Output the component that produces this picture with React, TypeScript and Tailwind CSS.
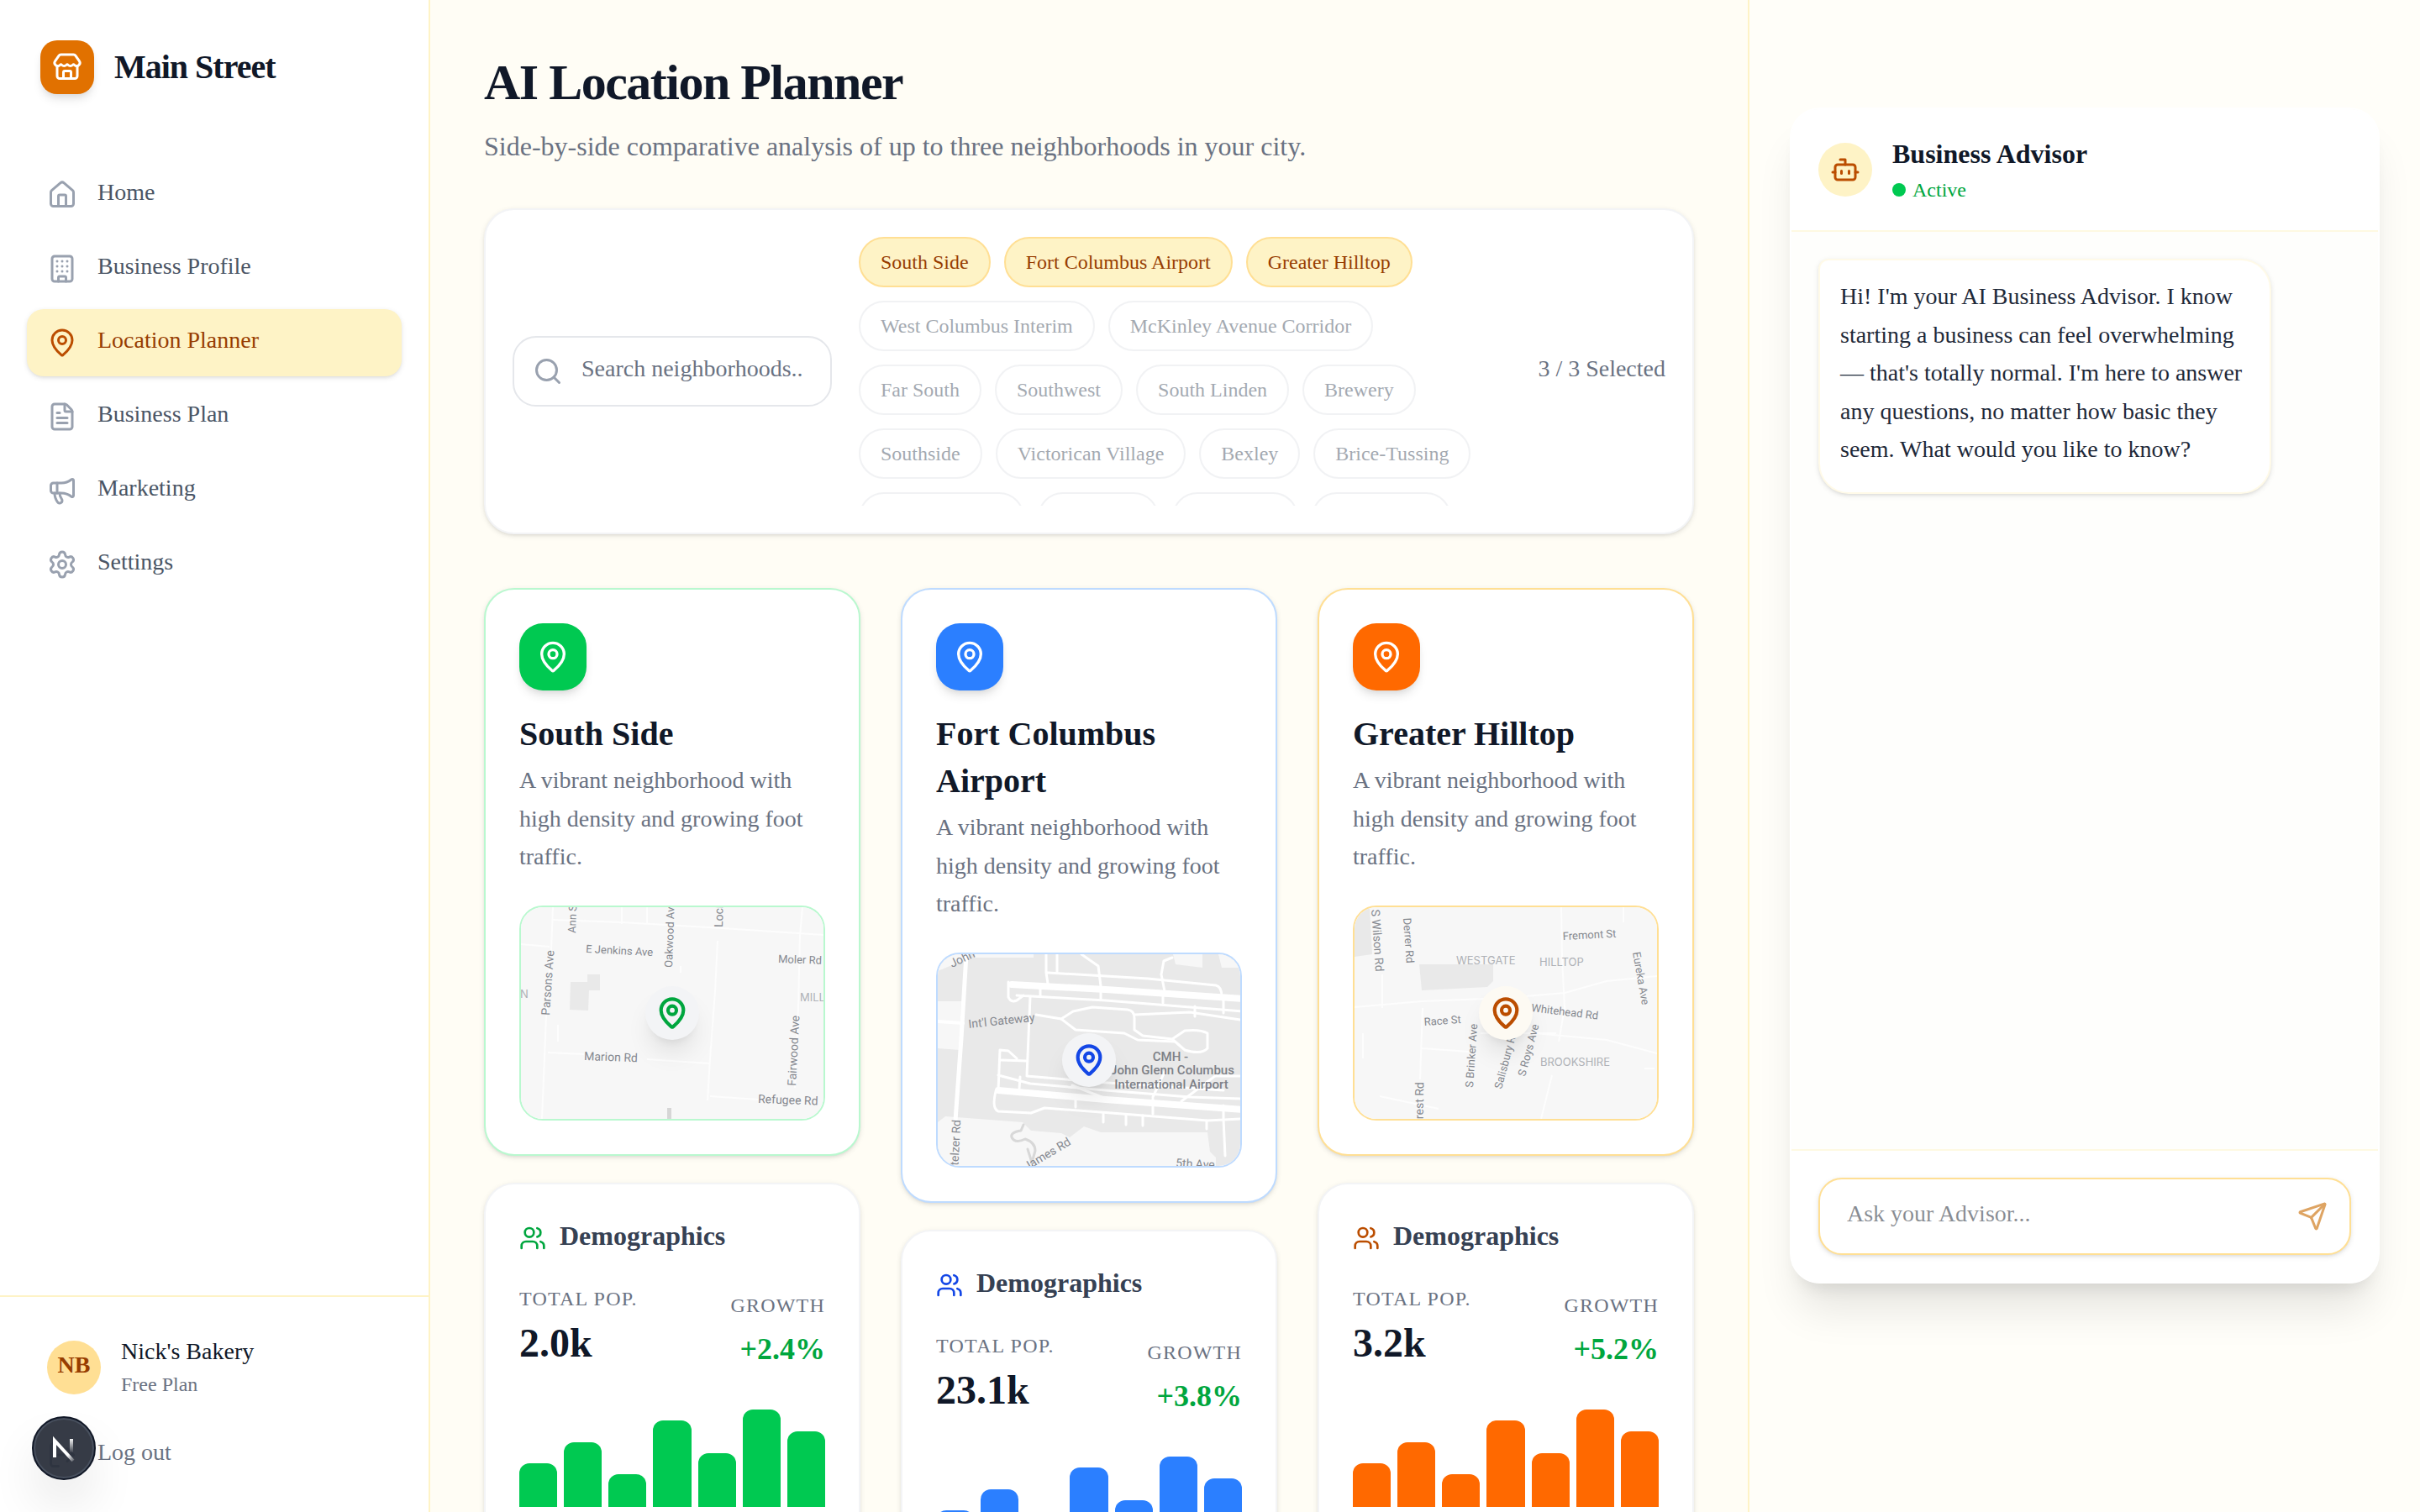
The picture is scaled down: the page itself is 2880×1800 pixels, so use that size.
import { ReactNode } from "react";
import {
  Bot,
  Building,
  FileText,
  House,
  LogOut,
  LucideIcon,
  MapPin,
  Megaphone,
  Search,
  Send,
  Settings,
  Store,
  Users,
} from "lucide-react";
import clsx from "clsx";

const navItems: { label: string; icon: LucideIcon; active?: boolean }[] = [
  { label: "Home", icon: House },
  { label: "Business Profile", icon: Building },
  { label: "Location Planner", icon: MapPin, active: true },
  { label: "Business Plan", icon: FileText },
  { label: "Marketing", icon: Megaphone },
  { label: "Settings", icon: Settings },
];

const selected = ["South Side", "Fort Columbus Airport", "Greater Hilltop"];

const available = [
  "West Columbus Interim",
  "McKinley Avenue Corridor",
  "Far South",
  "Southwest",
  "South Linden",
  "Brewery",
  "Southside",
  "Victorican Village",
  "Bexley",
  "Brice-Tussing",
  "Merion Village",
  "Eastmoor",
  "Northland",
  "Rocky Fork",
];

const bars = [40, 60, 30, 80, 50, 90, 70];

/* ---------- Shared styles ---------- */

const cardShadow =
  "shadow-[0_2px_6px_0_rgba(0,0,0,0.1),0_2px_4px_-2px_rgba(0,0,0,0.1)]";
const iconShadow =
  "shadow-[0_8px_12px_-2px_rgba(0,0,0,0.1),0_4px_8px_-4px_rgba(0,0,0,0.1)]";

const bodyText = "pb-1.5 text-[28px] leading-[34px]";
const titleText = "pb-1.5 text-[32px] leading-[42px] font-bold";

/* ---------- Maps ---------- */

type Label = {
  text: string;
  x: number;
  y: number;
  rotate?: number;
  size?: number;
};

const RoadLabels = ({ labels }: { labels: Label[] }) => (
  <g fill="#85888f" fontFamily="Roboto, sans-serif">
    {labels.map((l) => (
      <text
        key={l.text}
        fontSize={l.size ?? 13}
        transform={`translate(${l.x} ${l.y}) rotate(${l.rotate ?? 0})`}
      >
        {l.text}
      </text>
    ))}
  </g>
);

const AreaLabels = ({ labels }: { labels: Label[] }) => (
  <g fill="#aeb1b6" fontFamily="Inter, sans-serif">
    {labels.map((l) => (
      <text key={l.text} x={l.x} y={l.y} fontSize={13}>
        {l.text}
      </text>
    ))}
  </g>
);

const MapFrame = ({ children, fill }: { children: ReactNode; fill: string }) => (
  <svg
    viewBox="0 0 360 252"
    preserveAspectRatio="xMidYMid slice"
    className="h-full w-full"
    aria-hidden="true"
  >
    <rect width="360" height="252" fill={fill} />
    {children}
  </svg>
);

const SouthSideMap = () => (
  <MapFrame fill="#f7f7f7">
    <g fill="#e9e9e9">
      <path d="M59 89h20v-9h15v19H81l-1 24-22-1z" />
      <path d="M174 239h5v13h-5z" fill="#d6d6d6" />
    </g>
    <g fill="none" stroke="#fdfdfd" strokeWidth="2">
      <path d="M38 0 L36 50 L30 130 L25 252" />
      <path d="M38 15 L120 18 L240 25 L360 33" />
      <path d="M120 0V20 M150 0V20 M335 0 L332 34 L330 120 L326 215" />
      <path d="M234 40 L231 100 L225 180 L222 230" />
      <path d="M32 173 L75 175 M150 181 L224 186" />
      <path d="M225 225 L283 229 M0 44 L34 47 M44 140v20 M190 70v8" />
    </g>
    <RoadLabels
      labels={[
        { text: "Ann St", x: 65, y: 31, rotate: -88 },
        { text: "E Jenkins Ave", x: 77, y: 54, rotate: 3 },
        { text: "Oakwood Ave", x: 180, y: 72, rotate: -88 },
        { text: "Lockbourne Rd", x: 240, y: 24, rotate: -89, size: 14 },
        { text: "Parsons Ave", x: 34, y: 129, rotate: -86, size: 14 },
        { text: "Moler Rd", x: 306, y: 66, rotate: 2 },
        { text: "Fairwood Ave", x: 327, y: 213, rotate: -87, size: 14 },
        { text: "Marion Rd", x: 75, y: 182, rotate: 2, size: 14 },
        { text: "Refugee Rd", x: 282, y: 233, rotate: 2, size: 14 },
      ]}
    />
    <AreaLabels
      labels={[
        { text: "N", x: -1, y: 108 },
        { text: "MILLBROOK", x: 332, y: 112 },
      ]}
    />
  </MapFrame>
);

const AirportMap = () => (
  <MapFrame fill="#e9e9e9">
    <g fill="#f7f7f7">
      <path d="M0 0 H34 V6 L0 20z" />
      <path d="M0 56 H28 L26 114 L0 112z" />
      <path d="M9 193 L101 200 L111 210 L147 213 L157 218 L174 205 L194 212 L321 212 L324 235 L331 242 V252 H0 V200z" />
      <path d="M44 0h70v4H44z M280 0h35v16l-32-4z M334 0h26v16h-22z" />
    </g>
    <g fill="none" stroke="#fff" strokeLinejoin="round" strokeLinecap="round">
      <g strokeWidth="5">
        <path d="M34 0 L28 100 L21 198" />
        <path d="M0 80 L30 82" strokeWidth="4" />
      </g>
      <g strokeWidth="8">
        <path d="M88 36 L200 42 L362 53" />
        <path d="M72 162 L200 173 L362 185" />
      </g>
      <g strokeWidth="3">
        <path d="M84 33 V51 Q87 58 94 55 L102 49 M94 49 L200 55 L362 68" />
        <path d="M122 38v12 M194 40v14 M268 45v13 M340 50v20 M306 62v12" />
        <path d="M129 0 V22 L131 35 M142 0 V22 M131 22 L250 29 L331 37 Q338 39 338 50" />
        <path d="M171 0 L191 14 L194 38 M279 4 L269 8 L266 24 L270 44" />
        <path d="M117 72 L147 77 L161 68 L184 63 L226 66 Q234 67 234 76 V90 L244 97 L279 101 L294 114 Q314 120 321 112 V94 Q312 89 294 91 L279 101" />
        <path d="M147 77 L164 90 L222 94 L238 102 L282 104" />
        <path d="M110 51 L106 145 L187 152 L340 162" />
        <path d="M74 114 L72 162 M74 114 L84 115 L94 124 M76 126 L106 127 M72 144 L110 154 L200 162 L300 170 L360 172" />
        <path d="M69 163 Q64 184 72 187 L111 189 L127 183 L194 188 L321 198 L362 196" />
        <path d="M98 146 L97 160 M164 168v14 M256 172v18 M340 180v16 M340 196 L342 240" />
        <path d="M197 190v10 M224 191v12 M244 192v12 M320 198v10" />
        <path d="M160 156 L200 172 M256 170 L270 140 M290 175 L330 145 H360" />
        <path d="M234 72 L300 69 L360 78" />
      </g>
      <path
        d="M102 203 L99 210 Q86 212 88 218 Q92 226 104 220 Q116 224 116 234 L112 248 L107 232"
        stroke="#d8d8d8"
        strokeWidth="3"
      />
    </g>
    <RoadLabels
      labels={[
        { text: "John", x: 17, y: 16, rotate: -25, size: 14 },
        { text: "Int'l Gateway", x: 37, y: 88, rotate: -6, size: 14 },
        { text: "Stelzer Rd", x: 24, y: 260, rotate: -87, size: 14 },
        { text: "James Rd", x: 106, y: 258, rotate: -31, size: 14 },
        { text: "5th Ave", x: 283, y: 253, rotate: 3, size: 14 },
      ]}
    />
    <g
      fill="#7d8087"
      fontFamily="Roboto, sans-serif"
      fontSize="15"
      fontWeight="500"
      textAnchor="middle"
    >
      <text x="277" y="127">CMH -</text>
      <text x="279" y="143">John Glenn Columbus</text>
      <text x="278" y="160">International Airport</text>
    </g>
  </MapFrame>
);

const HilltopMap = () => (
  <MapFrame fill="#f7f7f7">
    <g fill="#e9e9e9">
      <path d="M0 0h18l3 56-21 3z" />
      <path d="M77 68 L165 68 V88 L158 95 L80 99z" />
    </g>
    <g fill="none" stroke="#fdfdfd" strokeWidth="2">
      <path d="M0 119 L80 112 L180 108 L250 102 L300 88 L360 82" />
      <path d="M33 80v40 M81 120 L78 205 M80 168 L136 172" />
      <path d="M246 0 L247 60 L250 120 L243 160 M320 0v18" />
      <path d="M215 150 L300 158 L360 174 M150 150h90" />
      <path d="M235 200 L222 252 M30 225 L100 240 M345 192h12 M10 150v30" />
    </g>
    <RoadLabels
      labels={[
        { text: "S Wilson Rd", x: 20, y: 3, rotate: 86, size: 14 },
        { text: "Derrer Rd", x: 58, y: 13, rotate: 86 },
        { text: "Fremont St", x: 248, y: 39, rotate: -3 },
        { text: "Eureka Ave", x: 331, y: 54, rotate: 80 },
        { text: "Whitehead Rd", x: 210, y: 124, rotate: 7 },
        { text: "Race St", x: 83, y: 141, rotate: -4 },
        { text: "S Brinker Ave", x: 141, y: 215, rotate: -86 },
        { text: "Salisbury Rd", x: 175, y: 217, rotate: -75 },
        { text: "S Roys Ave", x: 203, y: 202, rotate: -75 },
        { text: "Demorest Rd", x: 81, y: 289, rotate: -89, size: 14 },
      ]}
    />
    <AreaLabels
      labels={[
        { text: "WESTGATE", x: 121, y: 68 },
        { text: "HILLTOP", x: 220, y: 70 },
        { text: "BROOKSHIRE", x: 221, y: 189 },
      ]}
    />
  </MapFrame>
);

/* ---------- Neighborhood columns ---------- */

const neighborhoods = [
  {
    name: "South Side",
    population: "2.0k",
    growth: "+2.4%",
    map: SouthSideMap,
    border: "border-green-200",
    solid: "bg-green-500",
    text: "text-green-600",
    pin: "bg-gray-100",
  },
  {
    name: "Fort Columbus Airport",
    population: "23.1k",
    growth: "+3.8%",
    map: AirportMap,
    border: "border-blue-200",
    solid: "bg-blue-500",
    text: "text-blue-700",
    pin: "bg-gray-100",
  },
  {
    name: "Greater Hilltop",
    population: "3.2k",
    growth: "+5.2%",
    map: HilltopMap,
    border: "border-[#ffdf94]",
    solid: "bg-orange-500",
    text: "text-amber-700",
    pin: "bg-[#fdfaf3]",
  },
];

const NeighborhoodColumn = ({ data }: { data: (typeof neighborhoods)[number] }) => {
  const Map = data.map;

  return (
    <div className="flex min-w-0 flex-col gap-8">
      <section
        className={clsx("rounded-[36px] border-2 bg-white p-10", cardShadow, data.border)}
      >
        <div
          className={clsx(
            "mb-6 flex size-20 items-center justify-center rounded-[28px] text-white",
            iconShadow,
            data.solid,
          )}
        >
          <MapPin className="size-10" />
        </div>
        <h2 className="text-[40px] leading-14 font-bold text-gray-900">
          {data.name}
        </h2>
        <p className="mt-1 text-[28px] leading-relaxed text-gray-500">
          A vibrant neighborhood with high density and growing foot traffic.
        </p>
        <div
          className={clsx(
            "relative mt-[35px] h-64 overflow-hidden rounded-[28px] border-2",
            data.border,
          )}
        >
          <Map />
          <div className="absolute inset-0 flex items-center justify-center">
            <div
              className={clsx(
                "flex size-16 items-center justify-center rounded-full shadow-[0_20px_30px_-6px_rgba(0,0,0,0.1),0_8px_12px_-8px_rgba(0,0,0,0.1)]",
                data.pin,
                data.text,
              )}
            >
              <MapPin className="size-10" strokeWidth={2.5} />
            </div>
          </div>
        </div>
      </section>

      <section
        className={clsx("rounded-[36px] border-2 border-gray-100 bg-white p-10", cardShadow)}
      >
        <div className="mb-8 flex items-center gap-4">
          <Users className={clsx("size-8", data.text)} />
          <h3 className={clsx(titleText, "text-gray-700")}>Demographics</h3>
        </div>
        <dl className="flex items-end justify-between">
          <div>
            <dt className="mb-2 text-2xl leading-8 tracking-wider text-gray-500 uppercase">
              Total Pop.
            </dt>
            <dd className="pb-1.5 text-5xl leading-[58px] font-bold text-gray-900">
              {data.population}
            </dd>
          </div>
          <div className="text-right">
            <dt className="mb-2 text-2xl leading-8 tracking-wider text-gray-500 uppercase">
              Growth
            </dt>
            <dd className="text-4xl leading-14 font-bold text-green-600">
              {data.growth}
            </dd>
          </div>
        </dl>
        <div className="mt-8 flex h-32 items-end gap-2">
          {bars.map((height, i) => (
            <div
              key={i}
              className={clsx("flex-1 rounded-t-xl", data.solid)}
              style={{ height: `${height}%` }}
            />
          ))}
        </div>
      </section>
    </div>
  );
};

/* ---------- Layout ---------- */

const Sidebar = () => (
  <aside className="flex w-128 shrink-0 flex-col border-r-2 border-amber-100 bg-white">
    <div className="flex items-center gap-6 p-12">
      <div
        className={clsx(
          "flex size-16 items-center justify-center rounded-[20px] bg-amber-600 text-white",
          iconShadow,
        )}
      >
        <Store className="size-9" />
      </div>
      <span className="text-[40px] leading-14 font-bold tracking-tight text-gray-900">
        Main Street
      </span>
    </div>

    <nav className="flex flex-1 flex-col gap-2 px-8 pt-8">
      {navItems.map(({ label, icon: Icon, active }) => (
        <a
          key={label}
          href="#"
          className={clsx(
            "flex items-center gap-6 rounded-[20px] px-6 py-5",
            active ? "bg-amber-100 text-amber-800" : "text-gray-600",
            active && cardShadow,
          )}
        >
          <Icon
            className={clsx("size-9", active ? "text-amber-700" : "text-gray-400")}
          />
          <span className={bodyText}>{label}</span>
        </a>
      ))}
    </nav>

    <div className="border-t-2 border-amber-100 p-8">
      <div className="mb-4 flex items-center gap-6 px-6 py-4">
        <div className="flex size-16 items-center justify-center rounded-full bg-[#ffdf94] font-bold text-amber-800">
          <span className={bodyText}>NB</span>
        </div>
        <div>
          <p className={clsx(bodyText, "text-gray-900")}>Nick's Bakery</p>
          <p className="text-2xl leading-8 text-gray-500">Free Plan</p>
        </div>
      </div>
      <button className="flex w-full items-center gap-6 px-6 py-4 text-gray-500">
        <LogOut className="size-9" />
        <span className={bodyText}>Log out</span>
      </button>
    </div>
  </aside>
);

const NeighborhoodPicker = () => (
  <section
    className={clsx(
      "flex items-center gap-8 rounded-[36px] border-2 border-gray-100 bg-white p-8",
      cardShadow,
    )}
  >
    <div className="relative w-95 shrink-0">
      <Search className="absolute top-1/2 left-6 size-9 -translate-y-1/2 text-gray-400" />
      <input
        type="text"
        aria-label="Search neighborhoods"
        placeholder="Search neighborhoods..."
        className="w-full rounded-[28px] border-2 border-gray-200 pt-[17px] pr-8 pb-[23px] pl-20 text-[28px] leading-10 placeholder:text-gray-500"
      />
    </div>
    <div className="flex max-h-80 flex-1 flex-wrap gap-4 overflow-y-auto pr-4 [scrollbar-width:none]">
      {selected.map((name) => (
        <button
          key={name}
          className="rounded-full border-2 border-[#ffdf94] bg-amber-100 px-6 py-3 text-2xl leading-8 text-amber-800"
        >
          {name}
        </button>
      ))}
      {available.map((name) => (
        <button
          key={name}
          disabled
          className="rounded-full border-2 border-gray-200 bg-white px-6 py-3 text-2xl leading-8 text-gray-600 opacity-50"
        >
          {name}
        </button>
      ))}
    </div>
    <p className={clsx(bodyText, "shrink-0 text-gray-500")}>3 / 3 Selected</p>
  </section>
);

const AdvisorPanel = () => (
  <aside className="w-200 shrink-0 border-l-2 border-amber-100 bg-[#fffef9] px-12 pt-32">
    <div className="flex h-[calc(100vh-400px)] flex-col overflow-hidden rounded-[36px] border-2 border-white bg-[#fefefc] shadow-[0_40px_50px_-10px_rgba(0,0,0,0.1),0_16px_20px_-12px_rgba(0,0,0,0.1)]">
      <header className="flex items-center gap-6 border-b-2 border-amber-100/50 bg-white p-8">
        <div className="flex size-16 items-center justify-center rounded-full bg-amber-100 text-amber-700">
          <Bot className="size-9" />
        </div>
        <div>
          <h2 className={clsx(titleText, "text-gray-900")}>Business Advisor</h2>
          <p className="flex items-center gap-2 text-2xl leading-8 text-green-600">
            <span className="size-4 rounded-full bg-green-500" />
            Active
          </p>
        </div>
      </header>

      <div className="flex-1 p-8">
        <p
          className={clsx(
            "max-w-[85%] rounded-[36px] rounded-tl-xl border-2 border-amber-100/40 bg-white px-6 pt-5 pb-7 text-[28px] leading-relaxed text-gray-800",
            cardShadow,
          )}
        >
          Hi! I'm your AI Business Advisor. I know starting a business can feel
          overwhelming — that's totally normal. I'm here to answer any
          questions, no matter how basic they seem. What would you like to know?
        </p>
      </div>

      <form className="border-t-2 border-amber-100/50 bg-white p-8">
        <div className="relative">
          <input
            type="text"
            aria-label="Ask your Advisor"
            placeholder="Ask your Advisor..."
            className={clsx(
              "w-full rounded-[28px] border-2 border-[#ffdf94] bg-white pt-[21px] pr-24 pb-[27px] pl-8 text-[28px] leading-10 placeholder:text-gray-900/50",
              cardShadow,
            )}
          />
          <button
            type="button"
            aria-label="Send"
            className="absolute top-1/2 right-4 -translate-y-1/2 p-3 text-[#dea463]"
          >
            <Send className="size-9" />
          </button>
        </div>
      </form>
    </div>
  </aside>
);

// Floating dev-tools badge in the bottom left corner
const DevBadge = () => (
  <button
    aria-label="Open dev tools"
    className="fixed bottom-[38px] left-[38px] size-19 rounded-full border-2 border-[#111827] bg-[#2b303c]/95 shadow-[0_32px_64px_-16px_rgba(0,0,0,0.24)] ring-2 ring-[#48505e] ring-inset"
  >
    <svg viewBox="0 0 72 72" fill="none" className="h-full w-full">
      <defs>
        <linearGradient id="diag" x1="38" y1="40" x2="50" y2="52" gradientUnits="userSpaceOnUse">
          <stop offset="0.3" stopColor="#fff" />
          <stop offset="1" stopColor="#fff" stopOpacity="0" />
        </linearGradient>
        <linearGradient id="stem" x1="46" y1="24" x2="46" y2="42" gradientUnits="userSpaceOnUse">
          <stop stopColor="#fff" />
          <stop offset="1" stopColor="#fff" stopOpacity="0" />
        </linearGradient>
      </defs>
      <path d="M25 47V27L47 51" stroke="url(#diag)" strokeWidth="4" />
      <path d="M45 25v16" stroke="url(#stem)" strokeWidth="4" />
    </svg>
  </button>
);

export default function App() {
  return (
    <div className="flex h-screen overflow-hidden bg-[#fffdf5] font-['Liberation_Serif',serif]">
      <Sidebar />
      <main className="min-w-0 flex-1 overflow-hidden px-16 pt-[62px] pb-16">
        <header className="mb-[50px]">
          <h1 className="text-6xl leading-18 font-bold tracking-tight text-gray-900">
            AI Location Planner
          </h1>
          <p className="mt-4 text-[32px] leading-12 text-gray-500">
            Side-by-side comparative analysis of up to three neighborhoods in
            your city.
          </p>
        </header>
        <NeighborhoodPicker />
        <div className="mt-16 grid grid-cols-3 items-start gap-12">
          {neighborhoods.map((n) => (
            <NeighborhoodColumn key={n.name} data={n} />
          ))}
        </div>
      </main>
      <AdvisorPanel />
      <DevBadge />
    </div>
  );
}
